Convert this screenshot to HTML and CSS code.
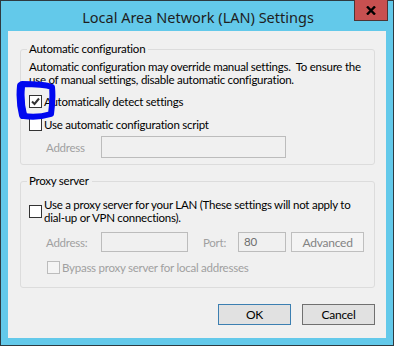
FILE: index.html
```html
<!DOCTYPE html>
<html lang="en">
<head>
    <meta charset="UTF-8">
    <title>Local Area Network (LAN) Settings</title>
    <link rel="stylesheet" href="styles.css">
</head>
<body>
    <div class="window">
        <div class="titlebar">
            <span class="title">Local Area Network (LAN) Settings</span>
            <button class="close" aria-label="Close">
                <svg width="10" height="9" viewBox="0 0 10 9"><path d="M1 0.5 L9 8.5 M9 0.5 L1 8.5" stroke="#000" stroke-width="2.4" fill="none"/></svg>
            </button>
        </div>
        <div class="client">
            <fieldset class="group group-auto">
                <legend>Automatic configuration</legend>
                <p class="desc">Automatic configuration may override manual settings.&nbsp; To ensure the use of manual settings, disable automatic configuration.</p>
                <label class="check">
                    <span class="box"><svg width="11" height="11" viewBox="0 0 11 11"><path d="M2 5.5 L4.5 8 L9 2.5" stroke="#333" stroke-width="2" fill="none"/></svg></span>
                    <span>Automatically detect settings</span>
                </label>
                <label class="check">
                    <span class="box"></span>
                    <span>Use automatic configuration script</span>
                </label>
                <div class="field-row">
                    <span class="field-label">Address</span>
                    <span class="input input-script"></span>
                </div>
            </fieldset>

            <fieldset class="group group-proxy">
                <legend>Proxy server</legend>
                <label class="check check-multi">
                    <span class="box"></span>
                    <span>Use a proxy server for your LAN (These settings will not apply to dial-up or VPN connections).</span>
                </label>
                <div class="field-row proxy-row">
                    <span class="field-label">Address:</span>
                    <span class="input input-proxy"></span>
                    <span class="field-label port-label">Port:</span>
                    <span class="input input-port">80</span>
                    <button class="btn btn-disabled">Advanced</button>
                </div>
                <label class="check check-disabled">
                    <span class="box"></span>
                    <span>Bypass proxy server for local addresses</span>
                </label>
            </fieldset>

            <div class="actions">
                <button class="btn btn-default">OK</button>
                <button class="btn btn-cancel">Cancel</button>
            </div>

            <svg class="marker" width="50" height="50" viewBox="0 0 50 50">
                <path d="M6 5 C15 5 28 5 36 8 C37 18 36 28 35 35 C25 38 14 38 8 37 C5 28 4 16 6 5 Z" stroke="#0008f0" stroke-width="6" fill="none" stroke-linejoin="round"/>
                <path d="M5 7 C4 17 5 28 7 36" stroke="#0008f0" stroke-width="8" fill="none" stroke-linecap="round"/>
            </svg>
        </div>
    </div>
</body>
</html>
```

FILE: styles.css
```css
body {
    margin: 0;
    font-family: Lato, 'Segoe UI', sans-serif;
    font-size: 11.5px;
    letter-spacing: -0.25px;
    color: #000;
}
.window {
    width: 394px;
    height: 346px;
    box-sizing: border-box;
    border: 1px solid #2e3a40;
    background-color: #63c9ea;
    padding: 0 7px 7px 7px;
    display: flex;
    flex-direction: column;
}
.titlebar {
    height: 30px;
    position: relative;
    display: flex;
    align-items: center;
    justify-content: center;
}
.title {
    font-family: 'Noto Sans', sans-serif;
    font-size: 14.5px;
    letter-spacing: 0;
    color: #1e1e1e;
    margin-top: 1px;
    margin-left: 2px;
}
.close {
    position: absolute;
    top: -1px;
    right: -2px;
    width: 34px;
    height: 21px;
    box-sizing: border-box;
    background-color: #c75050;
    border: 1px solid #4d3535;
    border-top: none;
    padding: 0;
    display: flex;
    align-items: center;
    justify-content: center;
}
.client {
    flex: 1;
    background-color: #f0f0f0;
    position: relative;
    padding: 11px 11px 0 12px;
    display: flex;
    flex-direction: column;
}
.group {
    margin: 0;
    padding: 0 0 0 8px;
    border: 1px solid #dcdcdc;
    border-radius: 3px;
    min-width: 0;
    box-sizing: border-box;
}
.group legend {
    font: inherit;
    letter-spacing: inherit;
    padding: 0 3px 0 2px;
    margin-left: -2px;
    line-height: 14px;
}
.group-auto {
    height: 123px;
}
.group-proxy {
    margin-top: 9px;
    height: 114px;
}
.desc {
    margin: 4px 0 0 0;
    line-height: 13px;
    padding-right: 4px;
}
.check {
    display: flex;
    align-items: center;
    gap: 2px;
    line-height: 13px;
}
.group-auto .check {
    margin-top: 9px;
}
.group-auto .check + .check {
    margin-top: 10px;
}
.box {
    width: 13px;
    height: 13px;
    box-sizing: border-box;
    border: 1px solid #333;
    background-color: #fff;
    display: flex;
    align-items: center;
    justify-content: center;
    flex-shrink: 0;
}
.check-multi {
    margin-top: 10px;
    padding-right: 12px;
}
.check-disabled {
    color: #a0a0a0;
    margin-left: 18px;
    margin-top: 9px;
}
.check-disabled .box {
    border-color: #bcbcbc;
    background-color: #f4f4f4;
}
.field-row {
    display: flex;
    align-items: center;
    margin-top: 5px;
    padding-left: 17px;
}
.field-label {
    color: #a0a0a0;
    width: 55px;
}
.input {
    height: 22px;
    box-sizing: border-box;
    border: 1px solid #bcbcbc;
    background-color: #f0f0f0;
}
.input-script {
    width: 185px;
}
.proxy-row {
    margin-top: 8px;
}
.proxy-row .input {
    height: 20px;
}
.input-proxy {
    width: 87px;
}
.port-label {
    width: auto;
    margin-left: 15px;
    margin-right: 12px;
}
.input-port {
    width: 48px;
    color: #6d6d6d;
    padding-left: 5px;
    line-height: 18px;
}
.btn {
    font-family: inherit;
    font-size: 12px;
    letter-spacing: inherit;
    height: 21px;
    width: 73px;
    box-sizing: border-box;
    padding: 0;
    background-color: #e1e1e1;
    border: 1px solid #adadad;
    color: #000;
}
.btn-disabled {
    margin-left: 5px;
    height: 20px;
    background-color: #f4f4f4;
    border-color: #bfbfbf;
    color: #838383;
}
.actions {
    display: flex;
    justify-content: flex-end;
    gap: 11px;
    margin-top: 16px;
}
.btn-default {
    border-color: #3c7fb1;
}
.btn-cancel {
    border-color: #707070;
}
.marker {
    position: absolute;
    left: 8px;
    top: 48px;
}
```
